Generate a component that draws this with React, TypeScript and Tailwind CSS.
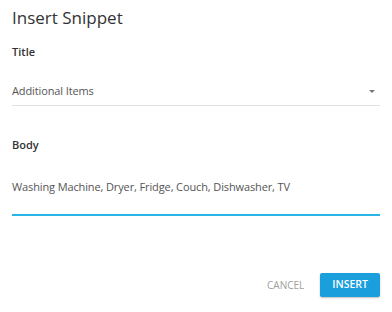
import React from 'react';

const InsertSnippet: React.FC = () => {
    return (
        <div className="w-[392px] h-[312px] bg-white px-3 font-['Open_Sans',sans-serif] flex flex-col">
            {/* Header */}
            <h2 className="pt-[6px] text-[17px] leading-6 text-[#333]">Insert Snippet</h2>

            {/* Title select */}
            <label className="mt-[14px] text-[11px] leading-4 font-semibold text-[#333]">Title</label>
            <div className="mt-[21px] flex items-center justify-between border-b border-[#e3e3e3] pb-[4px]">
                <span className="text-[11px] tracking-[-0.12px] leading-5 text-[#555]">Additional Items</span>
                <span className="mr-[5px] w-0 h-0 border-l-[3px] border-r-[3px] border-t-[3px] border-l-transparent border-r-transparent border-t-[#777]"></span>
            </div>

            {/* Body field */}
            <label className="mt-[31px] text-[11px] leading-4 font-semibold text-[#333]">Body</label>
            <div className="mt-[20px] border-b-2 border-[#29b5e8] pb-[17px]">
                <span className="text-[11px] tracking-[-0.12px] leading-5 text-[#555]">Washing Machine, Dryer, Fridge, Couch, Dishwasher, TV</span>
            </div>

            {/* Actions */}
            <div className="mt-[57px] flex items-center justify-end gap-4">
                <button className="text-[10px] text-[#9e9e9e] uppercase">Cancel</button>
                <button className="h-6 px-[12px] rounded-[2px] bg-[#1a9edc] text-white text-[10.5px] font-semibold uppercase shadow-[0_1px_2px_rgba(0,0,0,0.25)]">
                    Insert
                </button>
            </div>
        </div>
    );
};

export default InsertSnippet;
